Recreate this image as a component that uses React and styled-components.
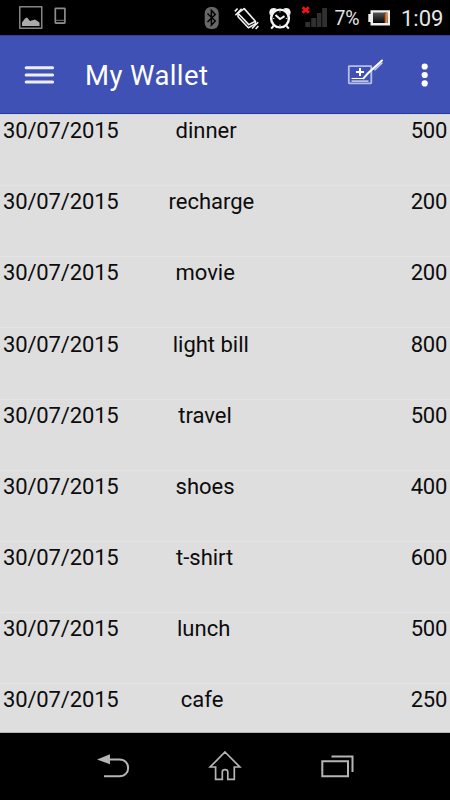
import React from "react";
import styled, { createGlobalStyle } from "styled-components";

const GlobalStyle = createGlobalStyle`
  * { box-sizing: border-box; }
  body { margin: 0; background: #000; font-family: Roboto, "Noto Sans", sans-serif; }
  svg { display: block; flex: none; }
`;

const Screen = styled.main`
  display: flex;
  flex-direction: column;
  width: 450px;
  height: 800px;
  overflow: hidden;
`;

const StatusBar = styled.header`
  display: flex;
  align-items: center;
  height: 35px;
  background: #000;
`;

const StatusText = styled.span`
  width: ${(p) => p.$width}px;
  margin-left: ${(p) => p.$gap}px;
  font-size: ${(p) => p.$size}px;
  line-height: 35px;
  letter-spacing: ${(p) => p.$spacing || 0}px;
  white-space: nowrap;
  color: #e4e4e4;
  padding-top: 2px;
`;

const AppBar = styled.nav`
  display: flex;
  align-items: center;
  height: 79px;
  background: #3f51b5;
  border-top: 1px solid #303f91;
  border-bottom: 1px solid #2438a8;
`;

const Title = styled.h1`
  width: 262px;
  margin: 0;
  padding-top: 2px;
  font-size: 27.5px;
  font-weight: 400;
  line-height: 40px;
  letter-spacing: 0.4px;
  color: #fff;
`;

const BarButton = styled.button`
  display: flex;
  width: ${(p) => p.$width}px;
  padding: 0;
  border: 0;
  background: none;
`;

const List = styled.section`
  height: 619px;
  overflow: hidden;
  background: #dedede;
  border-top: 1px solid #d3d5e3;
  border-bottom: 1px solid #b4b4b4;
`;

const Row = styled.article`
  display: grid;
  grid-template-columns: 160px 1fr 60px;
  height: 71.16px;
  padding: 2.1px 3px 0;
  border-bottom: 1px solid #e4e4e4;
  font-size: 22px;
  line-height: 28px;
  color: #0c0c0c;
`;

const DateCell = styled.time`
  letter-spacing: -0.15px;
  white-space: nowrap;
`;

const Label = styled.span`
  padding-left: ${(p) => p.$indent}px;
`;

const Amount = styled.span`
  letter-spacing: -0.3px;
  text-align: right;
`;

const NavBar = styled.footer`
  display: grid;
  grid-template-columns: 112px 112px 112px;
  justify-content: center;
  align-items: center;
  height: 67px;
  padding-bottom: 1px;
  background: #000;
`;

const NavButton = styled.button`
  display: flex;
  justify-content: center;
  padding: 0;
  border: 0;
  background: none;
`;

const entries = [
  ["dinner", 500, 12.5],
  ["recharge", 200, 5.5],
  ["movie", 200, 12.5],
  ["light bill", 800, 9.7],
  ["travel", 500, 15.3],
  ["shoes", 400, 12.6],
  ["t-shirt", 600, 13],
  ["lunch", 500, 14],
  ["cafe", 250, 17.8],
];

const NotificationIcons = () => (
  <svg width="200" height="35" viewBox="0 0 200 35">
    <rect x="19.8" y="6.8" width="22" height="21.4" fill="none" stroke="#999" strokeWidth="1.3" />
    <path d="M22 26V22.5L25 18.5L27 17.5L30 21L35 19.5L39.5 22.5V26Z" fill="#aaa" />
    <rect x="55.3" y="8.3" width="9.6" height="14.8" rx="0.5" fill="none" stroke="#8c8c8c" strokeWidth="1.7" />
    <path d="M56 20.3H64.5M56 22.5H64.5" stroke="#777" strokeWidth="1" />
  </svg>
);

const SystemIcons = () => (
  <svg width="130" height="35" viewBox="200 0 130 35">
    <rect x="204.7" y="7" width="14" height="22" rx="6" fill="#686868" />
    <path d="M207.5 13.5L215.3 21L211.4 25.2V10.3L215.3 14.5L207.5 22" fill="none" stroke="#000" strokeWidth="1.5" />
    <g fill="none" stroke="#f2f2f2" strokeWidth="1.6" strokeLinejoin="round">
      <path d="M244.2 8.6L255.4 21.2L248.8 24.6L238 13.2Z" />
      <path d="M238 13.2V16.8L248.4 27.7L255.4 23.9V21.2" />
      <path d="M234.8 11.4L237.6 8.5M235.4 15.2L241.6 8.8M252 28.5L258.2 22.2M255.6 29L258.4 26.1" />
    </g>
    <circle cx="280" cy="18.5" r="8.9" fill="none" stroke="#f5f5f5" strokeWidth="2.4" />
    <path d="M270 15.3C267.8 10.5 271.5 6.3 276.7 8.8ZM290 15.3C292.2 10.5 288.5 6.3 283.3 8.8Z" fill="#f5f5f5" />
    <path d="M275.5 15L280 19L284.5 16.2M273.5 26L271.2 28.7M286.5 26L288.8 28.7" fill="none" stroke="#f5f5f5" strokeWidth="2" />
    <path d="M280 11V12.5M280 24.5V26M272.8 18.5H274.3M285.8 18.5H287.3" stroke="#ccc" />
    <path d="M302.6 7.2L308.9 12.7M308.9 7.2L302.6 12.7" stroke="#ee1515" strokeWidth="2.8" />
    <path d="M305.2 22H310.2V27H305.2ZM311.2 18H316.2V27H311.2ZM316.9 13H321.3V27H316.9ZM322.2 8H327V27H322.2Z" fill="#303030" />
  </svg>
);

const Battery = () => (
  <svg width="22" height="35" viewBox="368 0 22 35">
    <defs>
      <linearGradient id="charge">
        <stop offset="0" stopColor="#963e0a" />
        <stop offset="1" stopColor="#ff9d50" />
      </linearGradient>
      <linearGradient id="shell" x2="0" y2="1">
        <stop stopColor="#555" />
        <stop offset="1" stopColor="#050505" />
      </linearGradient>
    </defs>
    <path d="M370.5 10.3H390V25.4H370.5V22H368.3V14H370.5Z" fill="#eee" />
    <rect x="373" y="12.5" width="14.5" height="10.5" fill="url(#shell)" />
    <rect x="384.5" y="12.5" width="2.6" height="10.5" fill="url(#charge)" />
  </svg>
);

const MenuIcon = () => (
  <svg width="85" height="40" viewBox="0 55 85 40">
    <path d="M26.2 67.8H52.6M26.2 75H52.6M26.2 82H52.6" stroke="#eeeefa" strokeWidth="3.1" strokeLinecap="round" />
  </svg>
);

const AddEntryIcon = () => (
  <svg width="39" height="36" viewBox="347 57 39 36">
    <rect x="348.8" y="66.1" width="22.5" height="17.2" rx="0.5" fill="none" stroke="#b7bee4" strokeWidth="1.8" />
    <path d="M351.5 78.5H363" stroke="#fff" strokeWidth="1.1" />
    <path d="M351.5 81.1H368.5" stroke="#c5cbea" strokeWidth="1.6" />
    <path d="M356 72H364M360 68V76" stroke="#fff" strokeWidth="2" />
    <path d="M363.5 78.3L368 73.3L382 60.5" fill="none" stroke="#fff" strokeWidth="2" strokeLinecap="round" />
    <path d="M374.5 70.2L382.3 62.6" stroke="#c8cdec" strokeWidth="1.5" />
  </svg>
);

const MoreIcon = () => (
  <svg width="26" height="36" viewBox="412 57 26 36">
    <circle cx="424.7" cy="66.5" r="3.1" fill="#fff" />
    <circle cx="424.7" cy="75" r="3.1" fill="#fff" />
    <circle cx="424.7" cy="83.4" r="3.1" fill="#fff" />
  </svg>
);

const BackIcon = () => (
  <svg width="34" height="26" viewBox="96 756 34 26">
    <path d="M97 762.5L110 757.3V767.3Z" fill="#b5b5b5" />
    <path d="M109 762.5H119.5C131 762.5 131 779.3 119.5 779.3H104" fill="none" stroke="#b5b5b5" strokeWidth="2" />
  </svg>
);

const HomeIcon = () => (
  <svg width="34" height="34" viewBox="208 749 34 34">
    <path d="M225 752L239.8 767H234.3V779.3H227.8V772Q227.8 769.7 225 769.7Q222.3 769.7 222.3 772V779.3H215.6V767H210.2Z" fill="none" stroke="#b5b5b5" strokeWidth="1.7" />
  </svg>
);

const RecentIcon = () => (
  <svg width="34" height="26" viewBox="320 756 34 26">
    <path d="M322.3 764.2H348V779.3H322.3ZM331.5 759.5H352.5V775" fill="none" stroke="#b5b5b5" strokeWidth="2" />
  </svg>
);

export default function App() {
  return (
    <Screen>
      <GlobalStyle />
      <StatusBar>
        <NotificationIcons />
        <SystemIcons />
        <StatusText $gap={4.5} $width={33.5} $size={19.5} $spacing={-0.3}>7%</StatusText>
        <Battery />
        <StatusText $gap={11} $width={44} $size={22}>1:09</StatusText>
      </StatusBar>
      <AppBar>
        <BarButton $width={85} aria-label="Open menu"><MenuIcon /></BarButton>
        <Title>My Wallet</Title>
        <BarButton $width={65} aria-label="Add entry"><AddEntryIcon /></BarButton>
        <BarButton $width={26} aria-label="More options"><MoreIcon /></BarButton>
      </AppBar>
      <List>
        {entries.map(([name, amount, indent]) => (
          <Row key={name}>
            <DateCell>30/07/2015</DateCell>
            <Label $indent={indent}>{name}</Label>
            <Amount>{amount}</Amount>
          </Row>
        ))}
      </List>
      <NavBar>
        <NavButton aria-label="Back"><BackIcon /></NavButton>
        <NavButton aria-label="Home"><HomeIcon /></NavButton>
        <NavButton aria-label="Recent apps"><RecentIcon /></NavButton>
      </NavBar>
    </Screen>
  );
}
